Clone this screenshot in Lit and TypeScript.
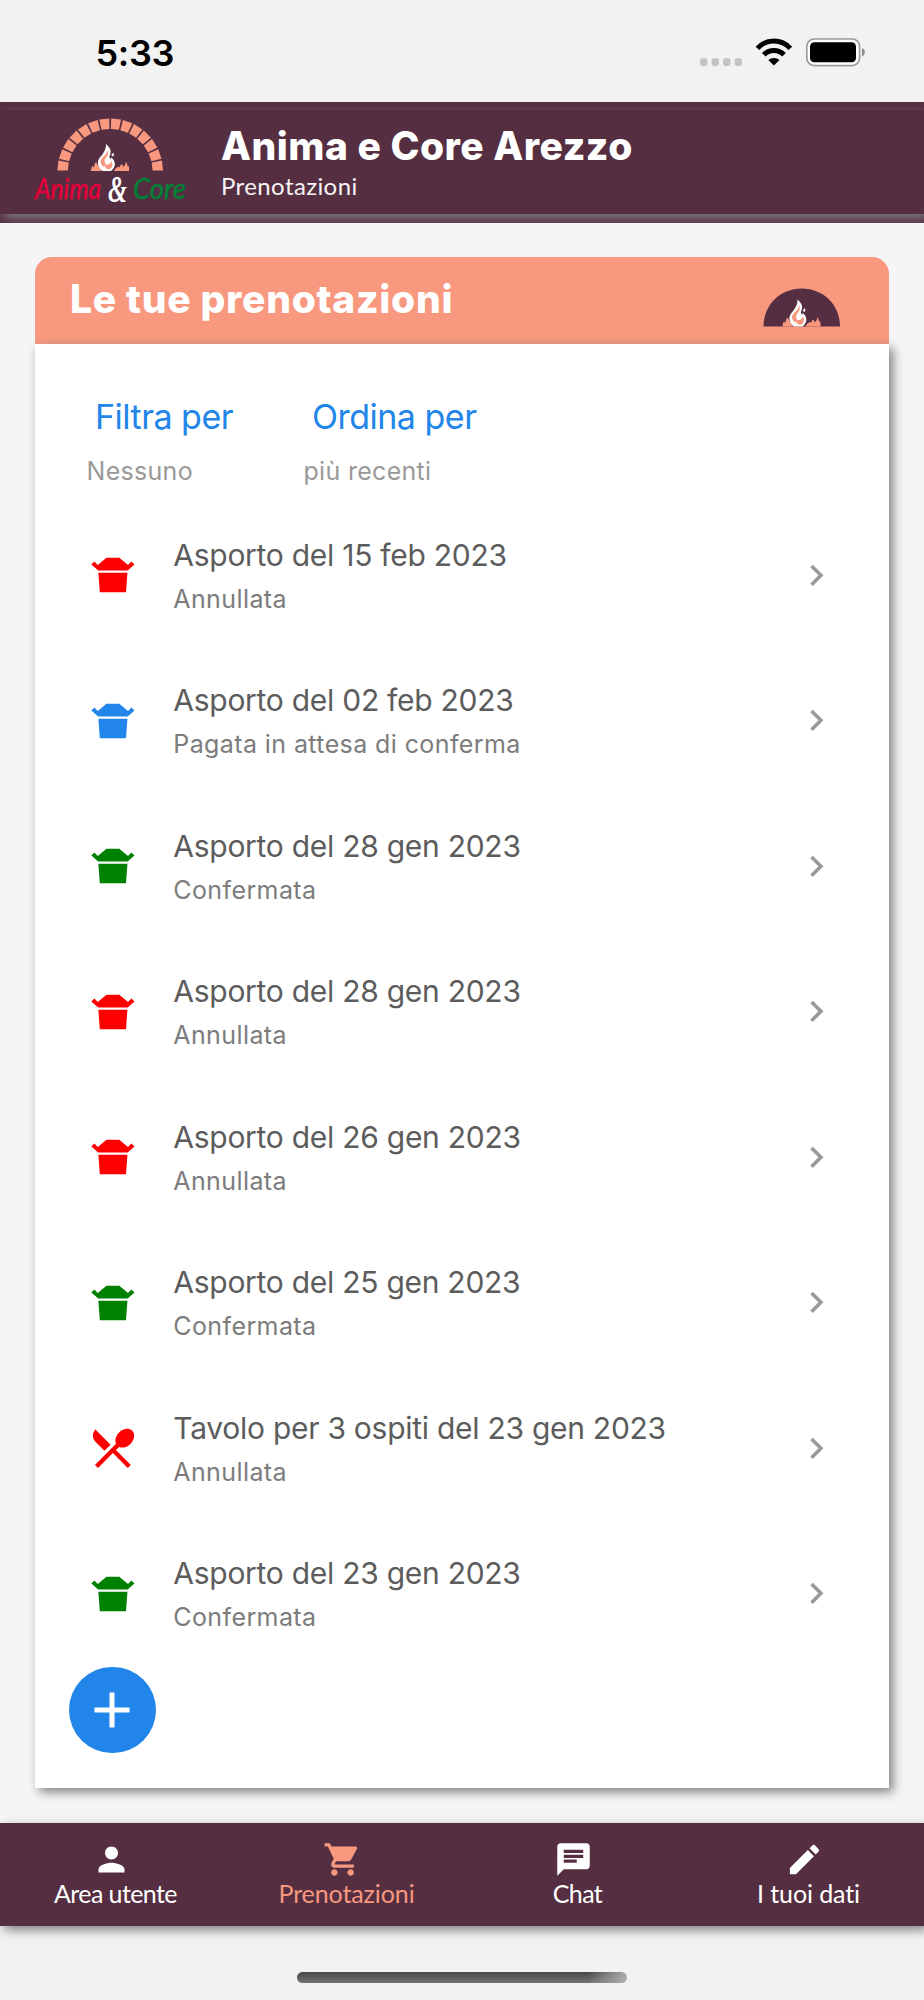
import { LitElement, html, svg, css } from 'lit';
import { customElement } from 'lit/decorators.js';

const PATHS = {
  takeout: 'M5.26 11h13.48l-.67 9H5.93zm3.76-7h5.95L19 7.38l1.59-1.59L22 7.21 18.82 10H5.18L2 7.21l1.41-1.41L5 7.38z',
  dining: 'M8.1 13.34l2.83-2.83L3.91 3.5c-1.56 1.56-1.56 4.09 0 5.66l4.19 4.18zm6.78-1.81c1.53.71 3.68.21 5.27-1.38 1.91-1.91 2.28-4.65.81-6.12-1.46-1.46-4.2-1.1-6.12.81-1.59 1.59-2.09 3.74-1.38 5.27L3.7 19.87l1.41 1.41L12 14.41l6.88 6.88 1.41-1.41L13.41 13l1.47-1.47z',
  chevron: 'M10 6L8.59 7.41 13.17 12l-4.58 4.59L10 18l6-6z',
  person: 'M12 12c2.21 0 4-1.79 4-4s-1.79-4-4-4-4 1.79-4 4 1.79 4 4 4zm0 2c-2.67 0-8 1.34-8 4v2h16v-2c0-2.66-5.33-4-8-4z',
  cart: 'M7 18c-1.1 0-1.99.9-1.99 2S5.9 22 7 22s2-.9 2-2-.9-2-2-2zM1 2v2h2l3.6 7.59-1.35 2.45c-.16.28-.25.61-.25.96 0 1.1.9 2 2 2h12v-2H7.42c-.14 0-.25-.11-.25-.25l.03-.12.9-1.63h7.45c.75 0 1.41-.41 1.75-1.03l3.58-6.49c.08-.14.12-.31.12-.48 0-.55-.45-1-1-1H5.21l-.94-2H1zm16 16c-1.1 0-1.99.9-1.99 2s.89 2 1.99 2 2-.9 2-2-.9-2-2-2z',
  chat: 'M20 2H4c-1.1 0-1.99.9-1.99 2L2 22l4-4h14c1.1 0 2-.9 2-2V4c0-1.1-.9-2-2-2zM6 9h12v2H6V9zm8 5H6v-2h8v2zm4-6H6V6h12v2z',
  edit: 'M3 17.25V21h3.75L17.81 9.94l-3.75-3.75L3 17.25zM20.71 7.04c.39-.39.39-1.02 0-1.41l-2.34-2.34c-.39-.39-1.02-.39-1.41 0l-1.83 1.83 3.75 3.75 1.83-1.83z',
  plus: 'M19 13h-6v6h-2v-6H5v-2h6V5h2v6h6v2z',
};

const icon = (name: keyof typeof PATHS, cls: string) => html`
  <svg class=${cls} viewBox="0 0 24 24" fill="currentColor" aria-hidden="true"><path d=${PATHS[name]}></path></svg>`;

/* Fire with embers, drawn in a 38 x 27 box. */
const flame = svg`
  <path fill="#f8987f" d="M0 27C.2 24.500 .3 23.500 1.500 22L3 23.500C3.200 21 4 19 5.200 17.800 5.800 20.500 8 22 10.500 27ZM23 27C24 24.500 25.500 23.500 27.500 22.500L28.500 23.500C28.700 22 29.800 20.700 31.200 20L32.200 23C34 21.500 34.600 20 35 17.800 36.200 19.500 36.500 21 36.500 22.500L37.500 21.500C38.200 23.500 38.200 25 38 27Z"/>
  <path fill="#fff" d="M15 0C20.500 5 20.500 8 18.300 12.500L19.500 15.500 20.300 13.500C24 16.500 25.500 21.500 21.500 25.500L20 27H11.500C7.500 24 6 19.500 7.500 16 9 12.500 15.500 7.500 15 0Z"/>
  <path fill="#f8987f" d="M16.800 5.500C18 9.500 16.500 12.500 14.500 14.500 13 16 13.500 18 14.500 19.500L13 23C10 21 8.800 18.500 9.800 16 11 13 16.500 10.500 16.800 5.500Z"/>
  <path fill="#f8987f" d="M13.800 20.200C16 21.200 19.500 20.500 20.300 17 22.300 20 21.500 23.500 18.500 25.300 15.500 25.500 13.200 23.500 13.800 20.200Z"/>
  <path fill="#fff" d="M22.300 8.500L23 11.500 21.500 12.500 20.300 11Z"/>`;

const RED = 'red', BLUE = 'blue', GREEN = 'green';
const BOOKINGS: { title: string; status: string; tone: string; table?: boolean }[] = [
  { title: 'Asporto del 15 feb 2023', status: 'Annullata', tone: RED },
  { title: 'Asporto del 02 feb 2023', status: 'Pagata in attesa di conferma', tone: BLUE },
  { title: 'Asporto del 28 gen 2023', status: 'Confermata', tone: GREEN },
  { title: 'Asporto del 28 gen 2023', status: 'Annullata', tone: RED },
  { title: 'Asporto del 26 gen 2023', status: 'Annullata', tone: RED },
  { title: 'Asporto del 25 gen 2023', status: 'Confermata', tone: GREEN },
  { title: 'Tavolo per 3 ospiti del 23 gen 2023', status: 'Annullata', tone: RED, table: true },
  { title: 'Asporto del 23 gen 2023', status: 'Confermata', tone: GREEN },
];

@customElement('status-bar')
class StatusBar extends LitElement {
  static styles = css`
    :host { display: flex; height: 102px; box-sizing: border-box; padding: 0 59px 0 95.500px; justify-content: space-between; background: #f2f2f2; }
    .time { font: 600 36px/44px Inter, sans-serif; letter-spacing: -0.3px; color: #000; padding-top: 31px; }
    svg { display: block; margin-top: 37px; }
  `;
  render() {
    return html`
      <div class="time">5:33</div>
      <svg width="166" height="31" viewBox="699 37 166 31" aria-hidden="true">
        <g fill="#c3c3c3">
          ${[700, 711.6, 723, 734.6].map(x => svg`<rect x=${x} y="58.300" width="7.400" height="7.600" rx="2.300"/>`)}
        </g>
        <g fill="none" stroke="#000" stroke-width="5">
          <path d="M757.500 48.300A22 22 0 0 1 790.300 48.300"/>
          <path d="M763.800 54.800A14 14 0 0 1 784 54.800"/>
        </g>
        <path d="M773.900 65.600L768.300 60A8.500 8.500 0 0 1 779.500 60Z"/>
        <rect x="806.800" y="39" width="52.800" height="26.600" rx="7.500" fill="#fff" stroke="#9b9b9b" stroke-width="1.700"/>
        <rect x="810" y="42.300" width="46" height="20" rx="4.300"/>
        <path fill="#8f8f8f" d="M862 48C865.800 49.500 865.800 55 862 56.500Z"/>
      </svg>`;
  }
}

@customElement('brand-header')
class BrandHeader extends LitElement {
  static styles = css`
    :host { display: block; height: 120.5px; box-sizing: border-box; padding-top: 8px; background: #552f41; overflow: hidden; }
    .bar { height: 104px; display: flex; background: #552f41; box-shadow: 4px 4px 10px gray; }
    .logo { display: block; margin-left: 30px; }
    .text { margin-left: 31px; padding-top: 12px; color: #fff; }
    .name { font: 800 39px/47px Inter, sans-serif; letter-spacing: 0.5px; white-space: nowrap; }
    .page { font: 400 24px/34px Lato, sans-serif; letter-spacing: 0.4px; color: #f8f3f5; }
    .script { font: italic 400 28px Lato, sans-serif; }
    .amp { font: italic 700 38px "Liberation Serif", serif; }
  `;
  render() {
    const bricks = Array.from({ length: 14 }, (_, i) => (i * 180) / 14 + 180 / 28);
    return html`
      <div class="bar">
        <svg class="logo" width="160" height="104" viewBox="30 110 160 104" role="img">
          ${bricks.map(a => svg`<path fill="#f8987f" transform="rotate(${a} 110.200 171.300)" d="M57.600 166.300L68 167.300V175.300L57.600 176.300Z"/>`)}
          <g transform="translate(91 144)">${flame}</g>
          <text class="script" x="35" y="199" textLength="66" lengthAdjust="spacingAndGlyphs" fill="#e4003a" stroke="#e4003a" stroke-width=".5">Anima</text>
          <text class="amp" x="108" y="202" textLength="19" lengthAdjust="spacingAndGlyphs" fill="#fff">&amp;</text>
          <text class="script" x="133" y="199" textLength="53" lengthAdjust="spacingAndGlyphs" fill="#008036" stroke="#008036" stroke-width=".5">Core</text>
        </svg>
        <div class="text">
          <div class="name">Anima e Core Arezzo</div>
          <div class="page">Prenotazioni</div>
        </div>
      </div>`;
  }
}

@customElement('booking-card')
class BookingCard extends LitElement {
  static styles = css`
    :host { display: flex; flex-direction: column; font-family: Inter, sans-serif; }
    .head { height: 86.5px; box-sizing: border-box; padding: 0 48.500px 0 35px; display: flex; justify-content: space-between; border-radius: 17px 17px 0 0; background: #f8987f; }
    .head h2 { margin: 0; font: 800 39px/83px Inter, sans-serif; letter-spacing: 0.7px; color: #fff; white-space: nowrap; }
    .oven { display: block; margin-top: 31px; }
    .body { flex: 1; padding: 47px 51.500px 0; background: #fff; box-shadow: 4px 4px 10px gray; }
    .filters { display: grid; grid-template-columns: 217px 217px; height: 112px; }
    .action { padding-left: 8.500px; font-size: 34px; line-height: 51px; letter-spacing: -0.5px; color: #2185e9; }
    .value { font-size: 25px; line-height: 59px; letter-spacing: 0.3px; color: #999; }
    .row { display: flex; align-items: center; height: 145.500px; }
    .kind { width: 51.800px; height: 51.800px; margin-right: 35px; }
    .red { color: #f00; }
    .blue { color: #2185e9; }
    .green { color: #008000; }
    .info { flex: 1; padding-top: 4px; }
    .title { font-size: 30px; line-height: 44px; letter-spacing: -0.27px; color: #5c5c5c; }
    .status { font-size: 25px; line-height: 45px; letter-spacing: 0.4px; color: #7c7c7c; }
    .go { width: 42.700px; height: 42.700px; color: #999; }
    .add { display: flex; align-items: center; justify-content: center; width: 86.500px; height: 86.500px; margin: 0.300px 0 0 -17.500px; padding: 0 1.500px 0.500px 0; box-sizing: border-box; border: 0; border-radius: 50%; background: #2185e9; color: #fff; }
    .plus { width: 60px; height: 60px; flex: none; }
  `;
  render() {
    return html`
      <div class="head">
        <h2>Le tue prenotazioni</h2>
        <svg class="oven" width="78" height="39" viewBox="0 0 78 39" aria-hidden="true">
          <path fill="#552f41" d="M.5 38.500C.5 17 17 .5 38.700 .5S77 17 77 38.500Z"/>
          <g transform="translate(19.500 11.500)">${flame}</g>
        </svg>
      </div>
      <div class="body">
        <div class="filters">
          <div><div class="action">Filtra per</div><div class="value">Nessuno</div></div>
          <div><div class="action">Ordina per</div><div class="value">più recenti</div></div>
        </div>
        ${BOOKINGS.map(b => html`
          <div class="row">
            ${icon(b.table ? 'dining' : 'takeout', 'kind ' + b.tone)}
            <div class="info"><div class="title">${b.title}</div><div class="status">${b.status}</div></div>
            ${icon('chevron', 'go')}
          </div>`)}
        <button class="add" aria-label="+">${icon('plus', 'plus')}</button>
      </div>`;
  }
}

@customElement('tab-bar')
class TabBar extends LitElement {
  static styles = css`
    :host { display: grid; grid-template-columns: repeat(4, 1fr); height: 103.500px; background: #552f41; box-shadow: 4px 4px 10px gray; color: #fff; }
    .tab { display: flex; flex-direction: column; align-items: center; padding-top: 17px; }
    .on { color: #f8987f; }
    .ico { width: 39px; height: 39px; margin-right: 9px; }
    .label { font: 400 25px/29px Lato, sans-serif; letter-spacing: -0.1px; white-space: nowrap; }
    .tight { letter-spacing: -0.6px; }
  `;
  render() {
    return html`
      <div class="tab">${icon('person', 'ico')}<div class="label tight">Area utente</div></div>
      <div class="tab on">${icon('cart', 'ico')}<div class="label">Prenotazioni</div></div>
      <div class="tab">${icon('chat', 'ico')}<div class="label tight">Chat</div></div>
      <div class="tab">${icon('edit', 'ico')}<div class="label">I tuoi dati</div></div>`;
  }
}

@customElement('app-root')
class AppRoot extends LitElement {
  static styles = css`
    :host { display: flex; flex-direction: column; width: 924px; height: 2000px; overflow: hidden; background: #f2f2f2; }
    .main { flex: 1; display: flex; flex-direction: column; padding: 34.500px 35px; background: #f5f5f5; }
    .card { flex: 1; }
    .foot { height: 74px; display: flex; justify-content: center; align-items: flex-start; }
    .home { width: 330px; height: 11px; margin-top: 46px; border-radius: 6px; background: linear-gradient(100deg, transparent 88%, #b0b0b0 100%), linear-gradient(#484848, #747474); }
  `;
  render() {
    return html`
      <status-bar></status-bar>
      <brand-header></brand-header>
      <div class="main"><booking-card class="card"></booking-card></div>
      <tab-bar></tab-bar>
      <div class="foot"><div class="home"></div></div>`;
  }
}
